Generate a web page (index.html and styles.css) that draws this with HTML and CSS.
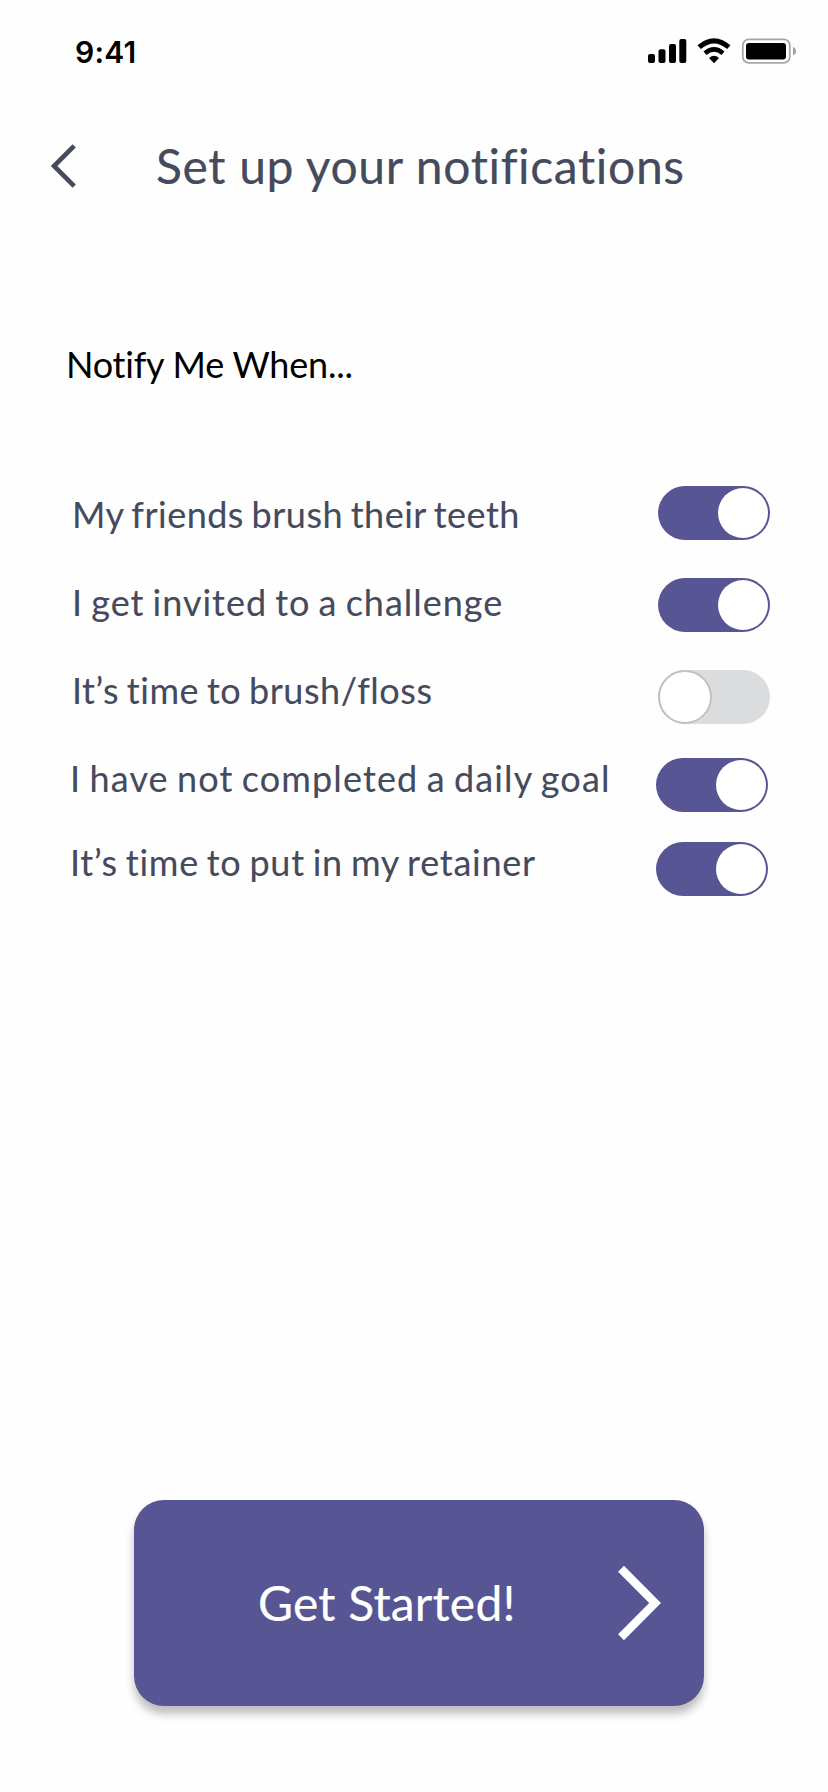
FILE: index.html
```html
<!DOCTYPE html>
<html lang="en">
<head>
<meta charset="utf-8">
<title>Set up your notifications</title>
<link rel="stylesheet" href="styles.css">
</head>
<body>
<div class="screen">
  <div class="status">
    <span class="time">9:41</span>
    <svg class="status-icons" width="150" height="28" viewBox="647 37 150 28">
      <rect x="648" y="54" width="7" height="9" rx="2"/>
      <rect x="658.5" y="49.3" width="7" height="13.7" rx="2"/>
      <rect x="669" y="44" width="7" height="19" rx="2"/>
      <rect x="679.3" y="39" width="7" height="24" rx="2"/>
      <path d="M699.2 47.2Q714 34.5 728.8 47.2" fill="none" stroke="#000" stroke-width="5"/>
      <path d="M705 53.3Q714 45.6 723 53.3" fill="none" stroke="#000" stroke-width="4.6"/>
      <path d="M709 58Q714 53.6 719 58L714 63.2Z"/>
      <rect x="742.8" y="39.3" width="47" height="23.6" rx="6" fill="none" stroke="#a6a6a6" stroke-width="1.8"/>
      <rect x="746" y="43" width="40" height="16.5" rx="3"/>
      <path d="M793 46.8Q796 48.3 796 51.2Q796 54.2 793 55.6Z" fill="#a0a0a0"/>
    </svg>
  </div>
  <header class="header">
    <svg class="back" width="26" height="44" viewBox="0 0 26 44"><path d="M23.2 1.8L3 22L23.2 42.2" fill="none" stroke="#454a5d" stroke-width="4.6"/></svg>
    <h1 class="title">Set up your notifications</h1>
  </header>
  <h2 class="subtitle">Notify Me When...</h2>
  <ul class="list">
    <li class="row row-1"><span class="label">My friends brush their teeth</span><span class="toggle on"></span></li>
    <li class="row row-2"><span class="label">I get invited to a challenge</span><span class="toggle on"></span></li>
    <li class="row row-3"><span class="label">It’s time to brush/floss</span><span class="toggle"></span></li>
    <li class="row row-4"><span class="label">I have not completed a daily goal</span><span class="toggle on"></span></li>
    <li class="row row-5"><span class="label">It’s time to put in my retainer</span><span class="toggle on"></span></li>
  </ul>
  <button class="cta">
    <span class="cta-text">Get Started!</span>
    <svg class="cta-arrow" width="44" height="76" viewBox="0 0 44 76"><path d="M4 3.8L38.1 38L4 72.2" fill="none" stroke="#fff" stroke-width="8.3"/></svg>
  </button>
</div>
</body>
</html>
```

FILE: styles.css
```css
*, *::before { box-sizing: border-box; margin: 0; padding: 0; }
body { background: #fefefe; font-family: Lato, "Open Sans", sans-serif; color: #454a5d; font-variant-ligatures: none; }
.screen { height: 1792px; display: flex; flex-direction: column; }
.status { display: flex; justify-content: space-between; align-items: flex-start; height: 65px; padding: 37px 31px 0 75px; color: #000; }
.time { font: 600 30px/30px Inter, sans-serif; letter-spacing: 0.2px; }
.header { display: flex; align-items: flex-start; margin-top: 72px; height: 58px; padding-left: 51px; }
.back { margin-top: 7px; }
.title { margin-left: 79px; font-size: 48px; line-height: 58px; font-weight: 400; white-space: nowrap; letter-spacing: 0.64px; -webkit-text-stroke: 0.2px; }
.subtitle { margin: 147px 0 0 66px; height: 44px; font-size: 36px; line-height: 44px; font-weight: 400; color: #000; letter-spacing: -0.22px; }
.list { margin-top: 100px; list-style: none; }
.row { display: flex; justify-content: space-between; align-items: flex-start; height: 54px; margin-bottom: 38px; padding: 0 58px 0 72px; }
.label { font-size: 36px; line-height: 40px; white-space: nowrap; word-spacing: -2px; -webkit-text-stroke: 0.1px; }
.row-1 .label { margin-top: 8px; letter-spacing: 0.48px; }
.row-2 .label { margin-top: 4px; letter-spacing: 0.98px; }
.row-3 .label { letter-spacing: 0.54px; }
.row-4 .label { letter-spacing: 1.12px; }
.row-5 .label { letter-spacing: 0.73px; }
.row-3 { margin-bottom: 34px; }
.row-4 { margin-bottom: 30px; }
.row-5 { margin-bottom: 0; }
.row-4, .row-5 { padding: 0 60px 0 70px; }
.toggle { width: 112px; height: 54px; border-radius: 27px; background: #dbdcde; display: flex; }
.toggle::before { content: ""; width: 54px; height: 54px; border-radius: 50%; border: 2px solid #c1c1c1; background: #fff; }
.toggle.on { background: #575593; justify-content: flex-end; padding: 2px; }
.toggle.on::before { width: 50px; height: 50px; border: 0; }
.cta { display: flex; align-items: center; width: 570px; height: 206px; margin: 604px 0 0 134px; padding: 0 43px 0 124px; border: 0; border-radius: 30px; background: #575593; box-shadow: 0 8px 8px rgba(0,0,0,.25); color: #fff; font-family: inherit; justify-content: space-between; }
.cta-text { font-size: 48px; line-height: 58px; letter-spacing: 0.2px; -webkit-text-stroke: 0.2px; }
```
